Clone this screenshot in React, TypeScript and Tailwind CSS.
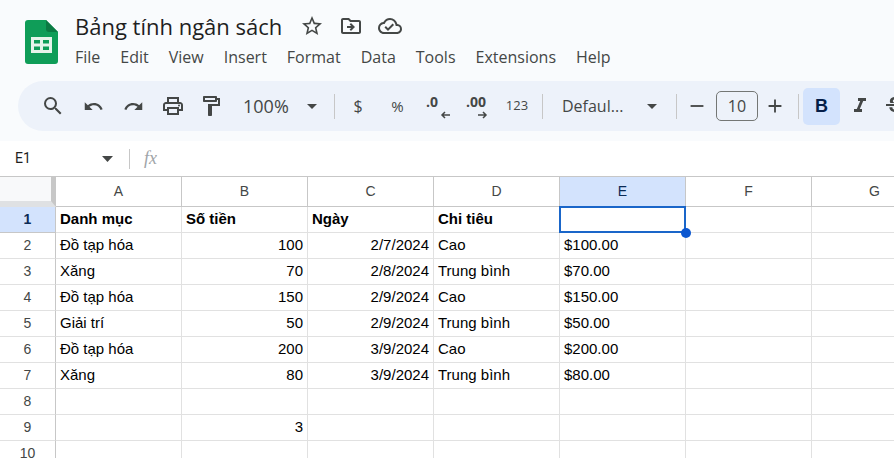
import React from "react";
import { MdSearch, MdUndo, MdRedo, MdOutlinePrint, MdOutlineFormatPaint, MdStarBorder, MdOutlineDriveFileMove, MdOutlineCloudDone, MdAdd, MdRemove, MdFormatItalic, MdStrikethroughS, MdArrowDropDown } from "react-icons/md";

const UI = { fontFamily: '"Open Sans", "Noto Sans", sans-serif' };
const ICON = "#444746";

function Slot({ w, children }: { w: string; children: React.ReactNode }) {
  return <div className={`${w} h-full flex items-center justify-center shrink-0`}>{children}</div>;
}
function Sep({ ml, mr }: { ml: string; mr: string }) {
  return <div className={`w-px h-[25px] bg-[#c7c7c7] shrink-0 ${ml} ${mr}`} />;
}

const SheetsLogo = () => (
  <svg width="33" height="44" viewBox="0 0 33 44" className="shrink-0">
    <path d="M3 0H21L33 12V41a3 3 0 0 1-3 3H3a3 3 0 0 1-3-3V3a3 3 0 0 1 3-3Z" fill="#0f9d58" />
    <path d="M21 0L33 12H24a3 3 0 0 1-3-3Z" fill="#0b7a43" />
    <path d="M6 17H27V33H6Z M9 20V23.5H15V20Z M18 20V23.5H24V20Z M9 26.5V30H15V26.5Z M18 26.5V30H24V26.5Z" fill="#e6f4ea" fillRule="evenodd" />
  </svg>
);

const ArrowLeft = () => (
  <svg width="11" height="8" viewBox="0 0 11 8"><path d="M10 4H2M5 1L2 4l3 3" fill="none" stroke={ICON} strokeWidth="1.5" /></svg>
);
const ArrowRight = () => (
  <svg width="11" height="8" viewBox="0 0 11 8"><path d="M1 4h8M6 1l3 3-3 3" fill="none" stroke={ICON} strokeWidth="1.5" /></svg>
);

const cols = ["A", "B", "C", "D", "E", "F", "G"];
type R = (string | null)[];
const rows: R[] = [
  ["Danh mục", "Số tiền", "Ngày", "Chi tiêu", null, null, null],
  ["Đồ tạp hóa", "100", "2/7/2024", "Cao", "$100.00", null, null],
  ["Xăng", "70", "2/8/2024", "Trung bình", "$70.00", null, null],
  ["Đồ tạp hóa", "150", "2/9/2024", "Cao", "$150.00", null, null],
  ["Giải trí", "50", "2/9/2024", "Trung bình", "$50.00", null, null],
  ["Đồ tạp hóa", "200", "3/9/2024", "Cao", "$200.00", null, null],
  ["Xăng", "80", "3/9/2024", "Trung bình", "$80.00", null, null],
  [null, null, null, null, null, null, null],
  [null, "3", null, null, null, null, null],
  [null, null, null, null, null, null, null],
];

export default function App() {
  return (
    <div className="w-[894px] h-[458px] overflow-hidden bg-white flex flex-col" style={{ fontFamily: '"Liberation Sans", Arial, sans-serif' }}>
      {/* Header */}
      <div className="h-[141px] bg-[#f9fbfd] shrink-0 flex flex-col" style={UI}>
        <div className="h-[81px] flex shrink-0">
          <div className="pl-[25px] pt-[20px] w-[75px] shrink-0"><SheetsLogo /></div>
          <div className="flex flex-col pt-[11px]">
            <div className="flex items-center h-[30px]">
              <span className="text-[22px] leading-[30px] text-[#1f1f1f] w-[225px] whitespace-nowrap">Bảng tính ngân sách</span>
              <MdStarBorder size={24} color={ICON} className="ml-0" />
              <MdOutlineDriveFileMove size={24} color={ICON} className="ml-[15px]" />
              <MdOutlineCloudDone size={24} color={ICON} className="ml-[15px]" />
            </div>
            <div className="flex gap-[20px] text-[16px] leading-[22px] text-[#444746] mt-[5px] whitespace-nowrap">
              {["File", "Edit", "View", "Insert", "Format", "Data", "Tools", "Extensions", "Help"].map((m) => (
                <span key={m}>{m}</span>
              ))}
            </div>
          </div>
        </div>
        <div className="h-[50px] ml-[18px] w-[900px] shrink-0 bg-[#edf2fa] rounded-l-[25px] flex items-center pl-[14px] text-[#444746]">
          <Slot w="w-[41px]"><MdSearch size={24} color={ICON} /></Slot>
          <Slot w="w-[41px]"><MdUndo size={21} color={ICON} /></Slot>
          <Slot w="w-[39px]"><MdRedo size={21} color={ICON} /></Slot>
          <Slot w="w-[39px]"><MdOutlinePrint size={24} color={ICON} /></Slot>
          <Slot w="w-[38px]"><MdOutlineFormatPaint size={24} color={ICON} /></Slot>
          <div className="w-[70px] pl-[13px] text-[18px] shrink-0">100%</div>
          <MdArrowDropDown size={24} color={ICON} className="shrink-0" />
          <Sep ml="ml-[10px]" mr="mr-[3px]" />
          <Slot w="w-[40px]"><span className="text-[16px]">$</span></Slot>
          <Slot w="w-[39px]"><span className="text-[15px]">%</span></Slot>
          <Slot w="w-[40px]">
            <div className="relative w-[22px] h-[26px] font-bold text-[14px] leading-[18px]">
              .0
              <span className="absolute right-[-3px] bottom-0"><ArrowLeft /></span>
            </div>
          </Slot>
          <Slot w="w-[40px]">
            <div className="relative w-[22px] h-[26px] font-bold text-[14px] leading-[18px] whitespace-nowrap">
              .00
              <span className="absolute right-0 bottom-0"><ArrowRight /></span>
            </div>
          </Slot>
          <Slot w="w-[40px]"><span className="text-[13px]">123</span></Slot>
          <Sep ml="ml-[5px]" mr="mr-[19px]" />
          <span className="w-[78px] text-[16px] shrink-0 whitespace-nowrap">Defaul...</span>
          <MdArrowDropDown size={24} color={ICON} className="shrink-0" />
          <Sep ml="ml-[12px]" mr="mr-[9px]" />
          <MdRemove size={22} color={ICON} className="shrink-0" />
          <div className="ml-[8px] w-[42px] h-[30px] border border-[#747775] rounded-[5px] flex items-center justify-center text-[16px] shrink-0">10</div>
          <MdAdd size={22} color={ICON} className="ml-[6px] shrink-0" />
          <Sep ml="ml-[12px]" mr="mr-[4px]" />
          <div className="w-[37px] h-[37px] rounded-[5px] bg-[#d3e3fd] flex items-center justify-center text-[18px] font-bold text-[#041e49] shrink-0" style={{ fontFamily: '"Liberation Sans", sans-serif' }}>B</div>
          <Slot w="w-[40px]"><MdFormatItalic size={24} color={ICON} /></Slot>
          <MdStrikethroughS size={24} color={ICON} className="ml-[3px] shrink-0" />
        </div>
      </div>
      {/* Formula bar */}
      <div className="h-[36px] bg-white flex items-center shrink-0 border-b border-[#c7c7c7]">
        <span className="w-[102px] pl-[15px] text-[14px] text-[#1f1f1f] shrink-0" style={{ fontFamily: "Roboto, sans-serif" }}>E1</span>
        <svg width="12" height="6" viewBox="0 0 12 6" className="shrink-0"><path d="M0 0h11L5.5 6Z" fill={ICON} /></svg>
        <div className="w-px h-[20px] bg-[#c7c7c7] ml-[15px] shrink-0" />
        <span className="ml-[14px] text-[18px] italic text-[#a0a4a8]" style={{ fontFamily: '"Liberation Serif", serif' }}>fx</span>
      </div>
      {/* Grid */}
      <div className="grid grid-cols-[56px_repeat(7,126px)] grid-rows-[30px_repeat(10,26px)] text-[15px] text-black">
        <div className="bg-[#f8f9fa] border-r-[5px] border-b-[6px] border-r-[#c7c7c7] border-b-[#dfe1e3] border-t-0" />
        {cols.map((c) => (
          <div key={c} className={`flex items-center justify-center text-[14px] border-r border-b border-[#c7c7c7] ${c === "E" ? "bg-[#d3e3fd] text-[#0b2a55]" : "bg-white text-[#444746]"}`}>{c}</div>
        ))}
        {rows.map((r, i) => (
          <React.Fragment key={i}>
            <div className={`flex items-center justify-center text-[14px] border-r border-b ${i === 0 ? "bg-[#d3e3fd] text-[#0b2a55] font-bold border-[#c7c7c7]" : "bg-white text-[#444746] border-r-[#c7c7c7] border-b-[#e1e1e1]"}`}>{i + 1}</div>
            {r.map((v, j) => {
              const right = j === 1 && i > 0 || (j === 2 && i > 0);
              const selected = i === 0 && j === 4;
              return (
                <div
                  key={j}
                  className={`relative flex items-center px-[4px] border-r border-b border-[#e1e1e1] whitespace-nowrap ${right ? "justify-end" : ""} ${i === 0 ? "font-bold" : ""}`}
                >
                  {v}
                  {selected && (
                    <>
                      <div className="absolute left-[-1px] top-[-1px] right-[-1px] bottom-[-1px] border-2 border-[#1a66c9]" />
                      <div className="absolute right-[-6px] bottom-[-6px] w-[10px] h-[10px] rounded-full bg-[#0b57d0] z-10" />
                    </>
                  )}
                </div>
              );
            })}
          </React.Fragment>
        ))}
      </div>
    </div>
  );
}
